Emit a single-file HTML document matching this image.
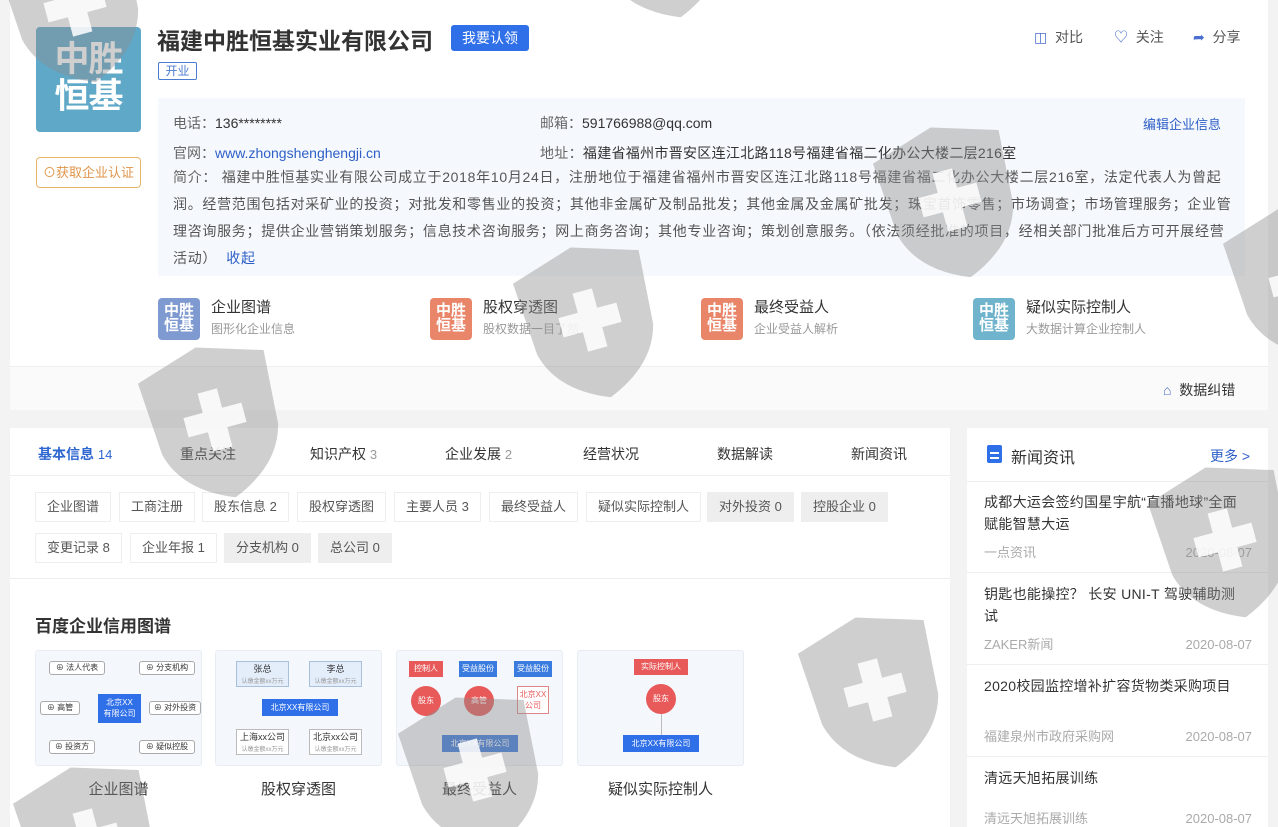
<!DOCTYPE html>
<html><head><meta charset="utf-8">
<style>
*{margin:0;padding:0;box-sizing:border-box}
html,body{width:1278px;height:827px;overflow:hidden}
body{background:#f3f3f3;font-family:"Liberation Sans","Noto Sans CJK SC",sans-serif;color:#333}
#root{position:relative;width:1278px;height:827px;overflow:hidden}
.a{position:absolute}
.card{position:absolute;background:#fff}
.t14{font-size:14px}
.blue{color:#2e5fc8}
.tag{position:absolute;height:30px;line-height:28px;border:1px solid #eee;font-size:13px;color:#555;padding:0 11px;background:#fff}
.tag.g{background:#eee;border-color:#eee}
.ft .ic{position:absolute;width:42px;height:42px;border-radius:4px;color:#fff;font-weight:bold;font-size:15px;line-height:15px;text-align:center;padding-top:5px}
.ft .ti{position:absolute;left:53px;top:-2px;font-size:15px;color:#333;white-space:nowrap}
.ft .su{position:absolute;left:53px;top:22px;font-size:12px;color:#999;white-space:nowrap}
.thumb{position:absolute;top:650px;width:167px;height:116px;background:#f4f7fb;border:1px solid #e8edf4;border-radius:3px;overflow:hidden}
.cap{position:absolute;top:778px;width:167px;text-align:center;font-size:15px;color:#333}
.nb{position:absolute;font-size:8px;text-align:center;line-height:11px}
.news{position:absolute;left:984px;width:258px;font-size:14px;line-height:22px;color:#333;letter-spacing:0.3px}
.meta{position:absolute;left:984px;width:268px;font-size:13px;color:#aaa;height:16px;line-height:16px;overflow:hidden}
.meta span{float:right}
.hr{position:absolute;left:967px;width:301px;height:1px;background:#eee}
.wm{position:absolute;pointer-events:none}
</style></head><body><div id="root">

<div class="card" style="left:10px;top:0;width:1258px;height:410px"></div>
<div class="a" style="left:36px;top:27px;width:105px;height:105px;background:#5fa8c8;border-radius:4px;color:#fff;font-weight:bold;font-size:35px;line-height:37px;text-align:center;padding-top:14px;letter-spacing:-1px">中胜<br>恒基</div>
<div class="a" style="left:36px;top:157px;width:105px;height:31px;border:1px solid #e8b46a;border-radius:4px;color:#e0954a;font-size:13px;line-height:29px;text-align:center">⊙获取企业认证</div>
<div class="a" style="left:157px;top:22px;font-size:23px;font-weight:bold;color:#333">福建中胜恒基实业有限公司</div>
<div class="a" style="left:451px;top:25px;width:78px;height:26px;background:#2f6fe8;border-radius:3px;color:#fff;font-size:14px;line-height:26px;text-align:center">我要认领</div>
<div class="a" style="left:158px;top:62px;width:39px;height:18px;border:1px solid #4a7bd0;border-radius:2px;color:#4a7bd0;font-size:12px;line-height:16px;text-align:center">开业</div>
<div class="a t14" style="left:1034px;top:27px;color:#555"><span style="color:#4a6fcf">◫</span>&nbsp; 对比</div>
<div class="a t14" style="left:1114px;top:27px;color:#555"><span style="color:#4a6fcf">♡</span>&nbsp; 关注</div>
<div class="a t14" style="left:1193px;top:27px;color:#555"><span style="color:#4a6fcf">➦</span>&nbsp; 分享</div>

<div class="a" style="left:158px;top:98px;width:1087px;height:178px;background:#f5f8fc"></div>
<div class="a t14" style="left:173px;top:113px;color:#333"><span style="color:#666">电话：</span>136********</div>
<div class="a t14" style="left:540px;top:113px"><span style="color:#666">邮箱：</span>591766988@qq.com</div>
<div class="a" style="left:1143px;top:114px;font-size:13px;color:#2e5fc8">编辑企业信息</div>
<div class="a t14" style="left:173px;top:143px"><span style="color:#666">官网：</span><span class="blue">www.zhongshenghengji.cn</span></div>
<div class="a t14" style="left:540px;top:143px;letter-spacing:0.3px"><span style="color:#666">地址：</span>福建省福州市晋安区连江北路118号福建省福二化办公大楼二层216室</div>
<div class="a t14" style="left:173px;top:164px;width:1062px;line-height:27px;color:#555;letter-spacing:0.7px"><span style="color:#666">简介：</span> 福建中胜恒基实业有限公司成立于2018年10月24日，注册地位于福建省福州市晋安区连江北路118号福建省福二化办公大楼二层216室，法定代表人为曾起润。经营范围包括对采矿业的投资；对批发和零售业的投资；其他非金属矿及制品批发；其他金属及金属矿批发；珠宝首饰零售；市场调查；市场管理服务；企业管理咨询服务；提供企业营销策划服务；信息技术咨询服务；网上商务咨询；其他专业咨询；策划创意服务。（依法须经批准的项目，经相关部门批准后方可开展经营活动） <span class="blue">&nbsp;收起</span></div>

<div class="ft a" style="left:158px;top:298px"><div class="ic" style="background:#7f9ad0">中胜<br>恒基</div><div class="ti">企业图谱</div><div class="su">图形化企业信息</div></div>
<div class="ft a" style="left:430px;top:298px"><div class="ic" style="background:#e9866a">中胜<br>恒基</div><div class="ti">股权穿透图</div><div class="su">股权数据一目了然</div></div>
<div class="ft a" style="left:701px;top:298px"><div class="ic" style="background:#e9866a">中胜<br>恒基</div><div class="ti">最终受益人</div><div class="su">企业受益人解析</div></div>
<div class="ft a" style="left:973px;top:298px"><div class="ic" style="background:#6fb4cc">中胜<br>恒基</div><div class="ti">疑似实际控制人</div><div class="su">大数据计算企业控制人</div></div>

<div class="a" style="left:10px;top:366px;width:1258px;height:44px;background:#fafafa;border-top:1px solid #eee"></div>
<div class="a t14" style="left:1163px;top:380px;color:#333"><span style="color:#4a6fcf">⌂</span>&nbsp; 数据纠错</div>

<div class="card" style="left:10px;top:428px;width:940px;height:399px"></div>
<div class="a" style="left:10px;top:475px;width:940px;height:1px;background:#eee"></div>
<div class="a" style="left:10px;top:578px;width:940px;height:1px;background:#eee"></div>
<div class="a t14" style="left:38px;top:444px;color:#2e66d0;font-weight:bold">基本信息 <span style="font-weight:normal;font-size:13px">14</span></div>
<div class="a t14" style="left:180px;top:444px">重点关注</div>
<div class="a t14" style="left:310px;top:444px">知识产权 <span style="color:#999;font-size:13px">3</span></div>
<div class="a t14" style="left:445px;top:444px">企业发展 <span style="color:#999;font-size:13px">2</span></div>
<div class="a t14" style="left:583px;top:444px">经营状况</div>
<div class="a t14" style="left:717px;top:444px">数据解读</div>
<div class="a t14" style="left:851px;top:444px">新闻资讯</div>

<div class="tag" style="left:35px;top:492px">企业图谱</div>
<div class="tag" style="left:119px;top:492px">工商注册</div>
<div class="tag" style="left:202px;top:492px">股东信息 2</div>
<div class="tag" style="left:297px;top:492px">股权穿透图</div>
<div class="tag" style="left:394px;top:492px">主要人员 3</div>
<div class="tag" style="left:489px;top:492px">最终受益人</div>
<div class="tag" style="left:586px;top:492px">疑似实际控制人</div>
<div class="tag g" style="left:707px;top:492px">对外投资 0</div>
<div class="tag g" style="left:801px;top:492px">控股企业 0</div>
<div class="tag" style="left:35px;top:533px">变更记录 8</div>
<div class="tag" style="left:130px;top:533px">企业年报 1</div>
<div class="tag g" style="left:224px;top:533px">分支机构 0</div>
<div class="tag g" style="left:318px;top:533px">总公司 0</div>

<div class="a" style="left:35px;top:612px;font-size:17px;font-weight:bold;color:#333">百度企业信用图谱</div>

<div class="thumb" style="left:35px">
 <div class="nb" style="left:13px;top:10px;width:56px;height:14px;border:1px solid #aaa;border-radius:3px;background:#fff">⊕ 法人代表</div>
 <div class="nb" style="left:103px;top:10px;width:56px;height:14px;border:1px solid #aaa;border-radius:3px;background:#fff">⊕ 分支机构</div>
 <div class="nb" style="left:4px;top:50px;width:40px;height:14px;border:1px solid #aaa;border-radius:3px;background:#fff">⊕ 高管</div>
 <div class="nb" style="left:113px;top:50px;width:52px;height:14px;border:1px solid #aaa;border-radius:3px;background:#fff">⊕ 对外投资</div>
 <div class="nb" style="left:13px;top:89px;width:46px;height:14px;border:1px solid #aaa;border-radius:3px;background:#fff">⊕ 投资方</div>
 <div class="nb" style="left:103px;top:89px;width:56px;height:14px;border:1px solid #aaa;border-radius:3px;background:#fff">⊕ 疑似控股</div>
 <div class="nb" style="left:62px;top:43px;width:43px;height:29px;background:#2f6fe8;color:#fff;padding-top:3px">北京XX<br>有限公司</div>
</div>
<div class="thumb" style="left:215px">
 <div class="nb" style="left:20px;top:10px;width:53px;height:26px;border:1px solid #a9c0dc;background:#e4eefb;color:#333;font-size:9px;padding-top:2px">张总<br><span style="font-size:6px;color:#999">认缴金额xx万元</span></div>
 <div class="nb" style="left:93px;top:10px;width:53px;height:26px;border:1px solid #a9c0dc;background:#e4eefb;color:#333;font-size:9px;padding-top:2px">李总<br><span style="font-size:6px;color:#999">认缴金额xx万元</span></div>
 <div class="nb" style="left:46px;top:48px;width:76px;height:17px;background:#2f6fe8;color:#fff;line-height:17px">北京XX有限公司</div>
 <div class="nb" style="left:20px;top:78px;width:53px;height:26px;border:1px solid #bbb;background:#fff;color:#333;font-size:9px;padding-top:2px">上海xx公司<br><span style="font-size:6px;color:#999">认缴金额xx万元</span></div>
 <div class="nb" style="left:93px;top:78px;width:53px;height:26px;border:1px solid #bbb;background:#fff;color:#333;font-size:9px;padding-top:2px">北京xx公司<br><span style="font-size:6px;color:#999">认缴金额xx万元</span></div>
</div>
<div class="thumb" style="left:396px">
 <div class="nb" style="left:12px;top:10px;width:34px;height:16px;background:#e85a5a;color:#fff;line-height:16px">控制人</div>
 <div class="nb" style="left:62px;top:10px;width:38px;height:16px;background:#3a7be0;color:#fff;line-height:16px">受益股份</div>
 <div class="nb" style="left:117px;top:10px;width:38px;height:16px;background:#3a7be0;color:#fff;line-height:16px">受益股份</div>
 <div class="nb" style="left:14px;top:35px;width:30px;height:30px;border-radius:50%;background:#e85a5a;color:#fff;line-height:30px">股东</div>
 <div class="nb" style="left:67px;top:35px;width:30px;height:30px;border-radius:50%;background:#e85a5a;color:#fff;line-height:30px">高管</div>
 <div class="nb" style="left:120px;top:35px;width:32px;height:28px;border:1px solid #d88;background:#fff;color:#e85a5a;padding-top:2px">北京XX<br>公司</div>
 <div class="nb" style="left:45px;top:84px;width:76px;height:17px;background:#3a7be0;color:#fff;line-height:17px">北京XX有限公司</div>
</div>
<div class="thumb" style="left:577px">
 <div class="nb" style="left:56px;top:8px;width:54px;height:16px;background:#e85a5a;color:#fff;line-height:16px">实际控制人</div>
 <div class="nb" style="left:68px;top:33px;width:30px;height:30px;border-radius:50%;background:#e85a5a;color:#fff;line-height:30px">股东</div>
 <div class="a" style="left:83px;top:63px;width:1px;height:21px;background:#bbb"></div>
 <div class="nb" style="left:45px;top:84px;width:76px;height:17px;background:#2f6fe8;color:#fff;line-height:17px">北京XX有限公司</div>
</div>
<div class="cap" style="left:35px">企业图谱</div>
<div class="cap" style="left:215px">股权穿透图</div>
<div class="cap" style="left:396px">最终受益人</div>
<div class="cap" style="left:577px">疑似实际控制人</div>

<div class="card" style="left:967px;top:428px;width:301px;height:399px"></div>
<div class="a" style="left:987px;top:445px;width:15px;height:18px;background:#2f6fe8;border-radius:2px"><div style="margin:7px 3px 0;height:2px;background:#fff"></div><div style="margin:3px 3px 0;height:2px;background:#fff"></div></div>
<div class="a" style="left:1011px;top:444px;font-size:16px;color:#333">新闻资讯</div>
<div class="a" style="left:1210px;top:446px;font-size:14px;color:#2e5fc8">更多 &gt;</div>
<div class="hr" style="top:481px"></div>
<div class="news" style="top:491px">成都大运会签约国星宇航“直播地球”全面赋能智慧大运</div>
<div class="meta" style="top:545px">一点资讯<span>2020-08-07</span></div>
<div class="hr" style="top:572px"></div>
<div class="news" style="top:583px">钥匙也能操控？ 长安 UNI-T 驾驶辅助测试</div>
<div class="meta" style="top:637px">ZAKER新闻<span>2020-08-07</span></div>
<div class="hr" style="top:664px"></div>
<div class="news" style="top:675px">2020校园监控增补扩容货物类采购项目</div>
<div class="meta" style="top:729px">福建泉州市政府采购网<span>2020-08-07</span></div>
<div class="hr" style="top:756px"></div>
<div class="news" style="top:767px">清远天旭拓展训练</div>
<div class="meta" style="top:811px">清远天旭拓展训练<span>2020-08-07</span></div>

<svg class="wm" width="1278" height="827" style="left:0;top:0">
<defs>
<g id="sh"><path d="M0 -75 L65 -55 L60 20 Q50 60 0 80 Q-50 60 -60 20 L-65 -55 Z" fill="rgba(140,140,140,0.42)"/><path d="M-10 -30 h20 v20 h20 v20 h-20 v20 h-20 v-20 h-20 v-20 h20 z" fill="rgba(255,255,255,0.85)"/></g>
</defs>
<use href="#sh" transform="translate(75,5) rotate(-15)"/>
<use href="#sh" transform="translate(215,420) rotate(-15)"/>
<use href="#sh" transform="translate(590,320) rotate(-15)"/>
<use href="#sh" transform="translate(950,200) rotate(-15)"/>
<use href="#sh" transform="translate(1225,540) rotate(-15)"/>
<use href="#sh" transform="translate(875,690) rotate(-15)"/>
<use href="#sh" transform="translate(475,770) rotate(-15)"/>
<use href="#sh" transform="translate(90,840) rotate(-15)"/>
<use href="#sh" transform="translate(1300,280) rotate(-15)"/>
<use href="#sh" transform="translate(660,-60) rotate(-15)"/>
</svg>
</div></body></html>
